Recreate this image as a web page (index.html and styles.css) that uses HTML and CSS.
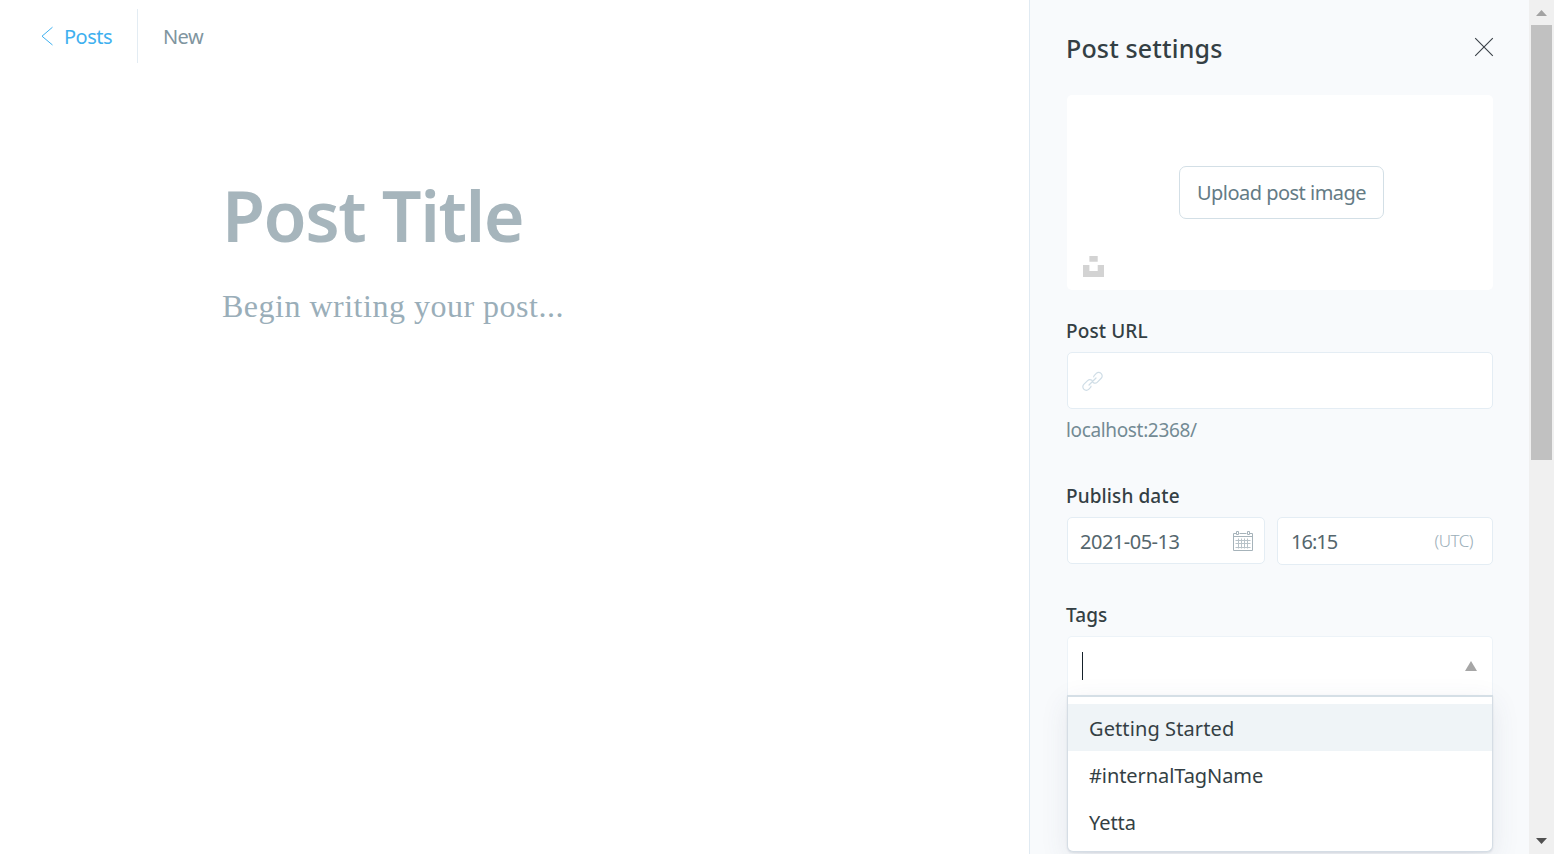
FILE: index.html
```html
<!DOCTYPE html>
<html lang="en">
<head>
<meta charset="utf-8">
<title>New post</title>
<link rel="stylesheet" href="styles.css">
</head>
<body>
<div class="app">
  <main class="editor">
    <header class="crumbs">
      <a class="back">
        <svg class="back-icon" width="13" height="20" viewBox="0 0 13 20" fill="none" stroke="currentColor" stroke-width="1"><path d="M12.500 1.200 2 10.200l10.500 8.800"/></svg>
        <span class="back-text">Posts</span>
      </a>
      <span class="crumb-current">New</span>
    </header>
    <div class="canvas">
      <h1 class="post-title">Post Title</h1>
      <p class="post-body">Begin writing your post...</p>
    </div>
  </main>
  <aside class="settings">
    <div class="settings-head">
      <h2 class="settings-title">Post settings</h2>
      <svg class="close" width="20" height="20" viewBox="0 0 20 20" fill="none" stroke="#394047" stroke-width="1.1"><path d="M1.200 1.200l17.600 17.600M18.800 1.200 1.200 18.800"/></svg>
    </div>
    <div class="uploader">
      <button class="upload-btn"><span class="upload-text">Upload post image</span></button>
      <svg class="unsplash" width="21" height="21" viewBox="0 0 21 21" fill="#d3d3d3"><path d="M6.400 0h8.300v5.800H6.400zM0 9.100h6.400v6h8.300v-6H21V21H0z"/></svg>
    </div>
    <section class="field url-field">
      <label class="label label-url">Post URL</label>
      <div class="input url-input">
        <svg width="21" height="21" viewBox="0 0 21 21" fill="none" stroke="#cfdde6" stroke-width="1.200" stroke-linecap="round" stroke-linejoin="round"><path d="M7 14l7-7M9 15.200c0 .6-.3 1.100-.7 1.500l-1.600 1.600a3.300 3.300 0 0 1-4.700 0l-.2-.2a3.300 3.300 0 0 1 0-4.700l3.800-3.800a3.300 3.300 0 0 1 4.300-.3M11.700 5.800c0-.6.3-1.100.7-1.500L14.300 2.400a3.300 3.300 0 0 1 4.700 0l.2.2a3.300 3.300 0 0 1 0 4.700l-3.800 3.800a3.300 3.300 0 0 1-4.300.3"/></svg>
      </div>
      <p class="hint">localhost:2368/</p>
    </section>
    <section class="field date-field">
      <label class="label label-date">Publish date</label>
      <div class="date-row">
        <div class="input date-input">
          <span class="date-text">2021-05-13</span>
          <svg width="20" height="20" viewBox="0 0 20 20" fill="none" stroke="#a6b3ba" stroke-width="1"><path d="M3.500 2.500h-3v17h19v-17h-3M6.500 2.500h7M.5 5.500h19"/><path d="M3.500.5h2v3h-2zM14.500.5h2v3h-2z"/><path d="M2.500 9.500h15M2.500 12.500h15M2.500 16.500h15M5.500 7.500v10M8.500 7.500v10M11.500 7.500v10M14.500 7.500v10" stroke="#b8c3c9"/></svg>
        </div>
        <div class="input time-input">
          <span class="time-text">16:15</span>
          <span class="utc">(UTC)</span>
        </div>
      </div>
    </section>
    <section class="field tags-field">
      <label class="label label-tags">Tags</label>
      <div class="tags-input">
        <span class="caret"></span>
        <svg width="12" height="10" viewBox="0 0 12 10" fill="#a6a6a6"><path d="M6 0l6 10H0z"/></svg>
      </div>
      <ul class="options">
        <li class="option active"><span class="opt-a">Getting Started</span></li>
        <li class="option"><span class="opt-b">#internalTagName</span></li>
        <li class="option"><span class="opt-c">Yetta</span></li>
      </ul>
    </section>
  </aside>
  <div class="scrollbar">
    <svg width="11" height="6" viewBox="0 0 11 6" fill="#a3a3a3"><path d="M5.500 0 11 6H0z"/></svg>
    <div class="thumb"></div>
    <svg class="arrow-down" width="11" height="6" viewBox="0 0 11 6" fill="#505050"><path d="M0 0h11L5.500 6z"/></svg>
  </div>
</div>
</body>
</html>
```

FILE: styles.css
```css
* { box-sizing: border-box; }
body { margin: 0; background: #fff; font-family: "Noto Sans", "Open Sans", sans-serif; font-size: 20px; color: #343f44; overflow: hidden; }
h1, h2, p, ul { margin: 0; padding: 0; }
svg { display: block; flex: none; }
span, h1, h2, p, label { white-space: nowrap; }
.app { display: flex; width: 1554px; height: 854px; overflow: hidden; }
.editor { width: 1029px; flex: none; }
.crumbs { display: flex; height: 63px; padding: 9px 0 0 40px; }
.back { display: flex; align-items: center; width: 98px; height: 54px; border-right: 1px solid #e3ecf3; color: #3eb0ef; }
.back-icon { margin: 0 11px 0 0; }
.back-text { line-height: 54px; padding-top: 1px; letter-spacing: -.5px; }
.crumb-current { line-height: 56px; margin-left: 25px; color: #80959f; letter-spacing: -.6px; }
.canvas { padding: 107px 0 0 222px; }
.post-title { font-size: 70px; font-weight: 600; line-height: 90px; color: #a6b5bc; letter-spacing: -1.5px; }
.post-body { margin: 26px 0 0 0; font-family: "Liberation Serif", serif; font-size: 32px; line-height: 40px; color: #9aaeb9; letter-spacing: .5px; }
.settings { width: 500px; flex: none; border-left: 1px solid #e0eaf2; background: #f8fafc; padding: 0 36px 0 37px; }
.settings-head { display: flex; justify-content: space-between; height: 95px; padding-top: 30px; }
.settings-title { margin-left: -1px; font-size: 25px; font-weight: 500; line-height: 36px; letter-spacing: .15px; }
.close { margin: 7px -1px 0 0; }
.uploader { position: relative; height: 195px; padding: 71px 0 0 112px; border-radius: 5px; background: #fff; }
.upload-btn { width: 205px; height: 53px; padding: 0; border: 1px solid #d3dfe6; border-radius: 7px; background: #fff; font: inherit; color: #647b85; }
.upload-text { letter-spacing: -.52px; }
.unsplash { position: absolute; left: 16px; bottom: 13px; }
.field { display: flex; flex-direction: column; }
.label { margin-left: -1px; font-size: 19px; font-weight: 500; line-height: 26px; letter-spacing: .1px; }
.input { display: flex; align-items: center; justify-content: space-between; border: 1px solid #e4edf4; border-radius: 5px; background: #fff; color: #54666d; }
.url-field { height: 193px; padding-top: 28px; }
.url-input { height: 57px; margin-top: 8px; padding: 1px 14px 0; }
.hint { margin: 7px 0 0 -1px; font-size: 19px; line-height: 28px; color: #738a94; letter-spacing: -.35px; }
.date-field { height: 119px; }
.date-row { display: flex; gap: 12px; margin-top: 8px; align-items: flex-start; }
.date-input { width: 198px; height: 47px; padding: 2px 11px 1px 12px; letter-spacing: -.5px; }
.time-input { width: 216px; height: 48px; padding: 1px 19px 0 13px; letter-spacing: -1px; }
.utc { padding-bottom: 2px; font-size: 17px; font-weight: 300; color: #9baeb8; letter-spacing: -.5px; }
.tags-input { display: flex; align-items: center; justify-content: space-between; height: 59px; margin-top: 8px; padding: 0 15px 0 14px; border: 1px solid #edf3f8; border-bottom: 0; border-radius: 5px 5px 0 0; background: #fff; }
.caret { width: 1px; height: 28px; background: #15212a; }
.options { height: 157px; border: 1px solid #d5dde5; border-top: 2px solid #d5dfe6; border-radius: 0 0 6px 6px; padding-top: 7px; background: #fff; list-style: none; box-shadow: 0 1px 2px rgba(60,70,90,.12), 0 8px 28px rgba(60,65,110,.1); }
.option { height: 47px; line-height: 49px; padding-left: 21px; letter-spacing: -.08px; }
.opt-a { letter-spacing: .1px; }
.active { background: #eff4f7; }
.scrollbar { display: flex; flex-direction: column; align-items: center; width: 25px; flex: none; padding: 10px 0; background: #f0f0f0; }
.thumb { width: 21px; height: 435px; margin-top: 9px; background: #c1c1c1; }
.arrow-down { margin-top: auto; }
```
